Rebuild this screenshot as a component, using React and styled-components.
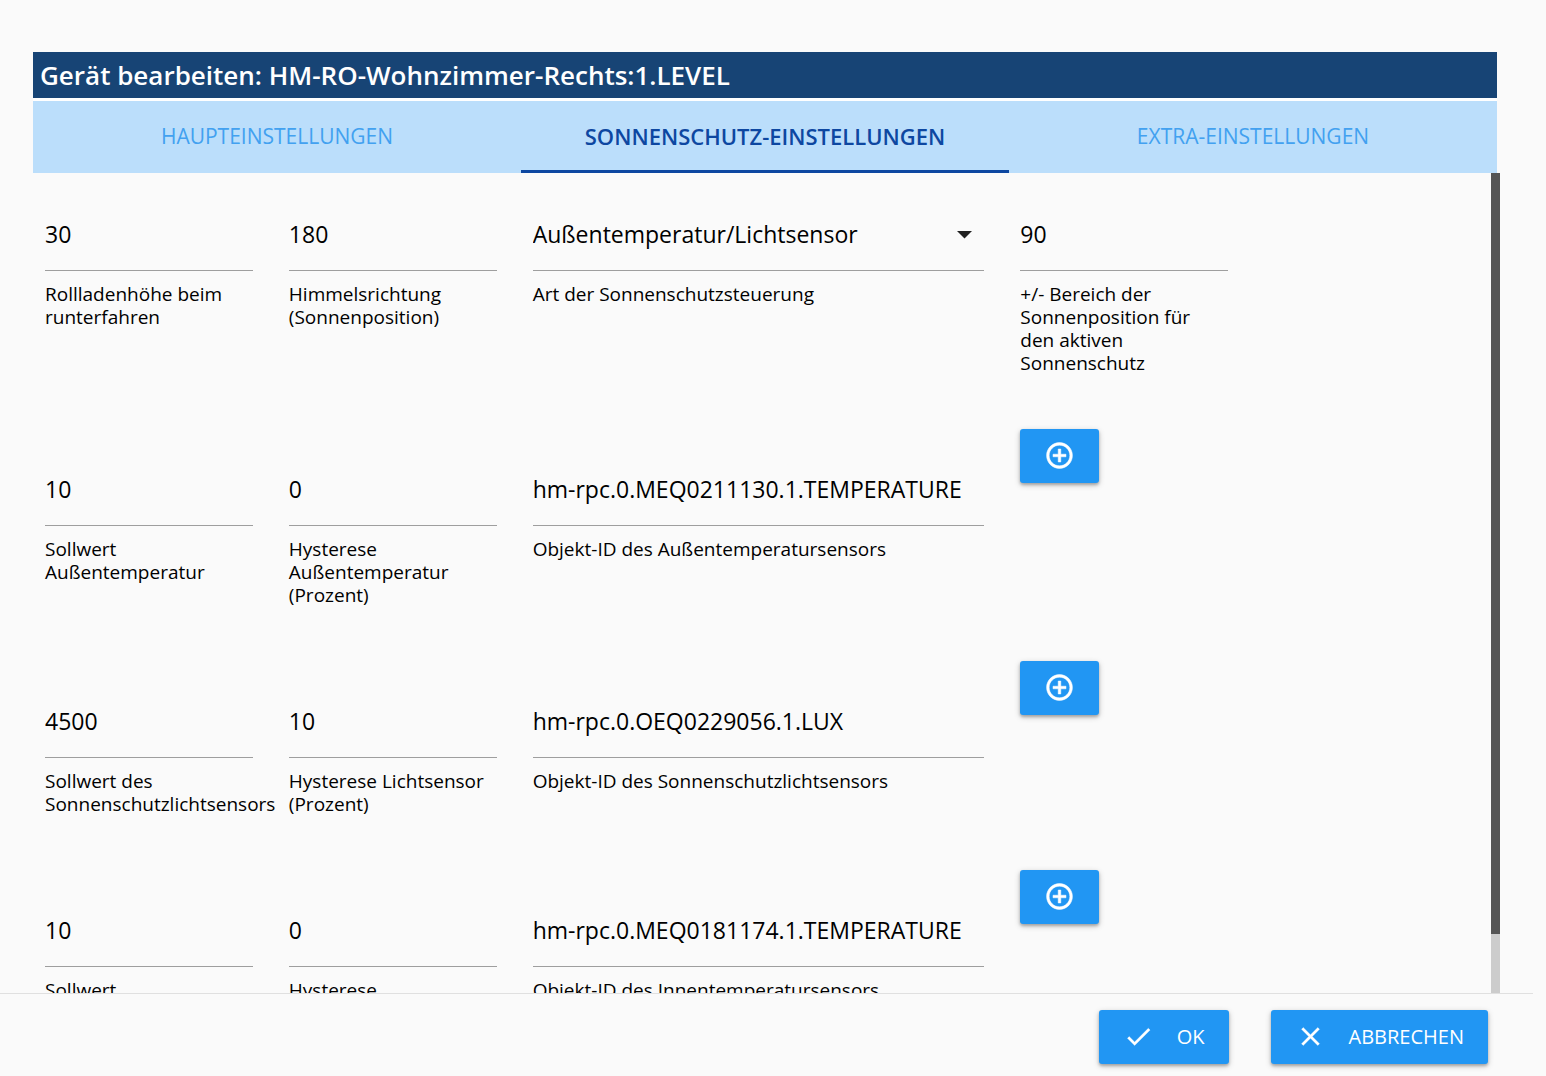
import { useEffect, useId, useRef, useState } from 'react';
import styled, { createGlobalStyle } from 'styled-components';

const tabs = [
  { id: 'main', label: 'Haupteinstellungen' },
  { id: 'sun', label: 'Sonnenschutz-Einstellungen' },
  { id: 'extra', label: 'Extra-Einstellungen' },
];

const sensorRows = [
  {
    id: 'outside',
    setpoint: { value: '10', label: 'Sollwert Außentemperatur' },
    hysteresis: { value: '0', label: 'Hysterese Außentemperatur (Prozent)' },
    sensor: { value: 'hm-rpc.0.MEQ0211130.1.TEMPERATURE', label: 'Objekt-ID des Außentemperatursensors' },
  },
  {
    id: 'light',
    setpoint: { value: '4500', label: 'Sollwert des Sonnenschutzlichtsensors' },
    hysteresis: { value: '10', label: 'Hysterese Lichtsensor (Prozent)' },
    sensor: { value: 'hm-rpc.0.OEQ0229056.1.LUX', label: 'Objekt-ID des Sonnenschutzlichtsensors' },
  },
  {
    id: 'inside',
    setpoint: { value: '10', label: 'Sollwert Innentemperatur' },
    hysteresis: { value: '0', label: 'Hysterese Innentemperatur (Prozent)' },
    sensor: { value: 'hm-rpc.0.MEQ0181174.1.TEMPERATURE', label: 'Objekt-ID des Innentemperatursensors' },
  },
];

const Field = ({ label, value }) => {
  const id = useId();

  return (
    <FieldBox>
      <Input id={id} type="text" defaultValue={value} />
      <Label htmlFor={id}>{label}</Label>
    </FieldBox>
  );
};

const SelectField = ({ label, options }) => {
  const id = useId();

  return (
    <FieldBox>
      <SelectWrap>
        <Select id={id}>
          {options.map((option) => (
            <option key={option}>{option}</option>
          ))}
        </Select>
        <Caret viewBox="0 0 15 8" aria-hidden="true">
          <path d="M0 0h15L7.500 7.500z" />
        </Caret>
      </SelectWrap>
      <Label htmlFor={id}>{label}</Label>
    </FieldBox>
  );
};

const AddIcon = () => (
  <Icon viewBox="0 0 24 24" stroke="currentColor" strokeWidth="0.4" aria-hidden="true">
    <path d="M13 7h-2v4H7v2h4v4h2v-4h4v-2h-4V7zm-1-5C6.480 2 2 6.480 2 12s4.480 10 10 10 10-4.480 10-10S17.520 2 12 2zm0 18c-4.410 0-8-3.590-8-8s3.590-8 8-8 8 3.590 8 8-3.590 8-8 8z" />
  </Icon>
);

const CheckIcon = () => (
  <Icon viewBox="0 0 24 24" stroke="currentColor" strokeWidth="0.2" aria-hidden="true">
    <path d="M9 16.170L4.830 12l-1.420 1.410L9 19 21 7l-1.410-1.410z" />
  </Icon>
);

const CloseIcon = () => (
  <Icon viewBox="0 0 24 24" stroke="currentColor" strokeWidth="0.2" aria-hidden="true">
    <path d="M19 6.410L17.590 5 12 10.590 6.410 5 5 6.410 10.590 12 5 17.590 6.410 19 12 13.410 17.590 19 19 17.590 13.410 12z" />
  </Icon>
);

const ScrollPanel = ({ children }) => {
  const ref = useRef(null);
  const [thumb, setThumb] = useState({ height: 0, top: 0 });

  const measure = () => {
    const { clientHeight, scrollHeight, scrollTop } = ref.current;
    setThumb({
      height: scrollHeight > clientHeight ? (clientHeight / scrollHeight) * 100 : 0,
      top: (scrollTop / scrollHeight) * 100,
    });
  };

  useEffect(() => {
    measure();
    window.addEventListener('resize', measure);
    return () => window.removeEventListener('resize', measure);
  }, [children]);

  return (
    <PanelFrame>
      <Panel ref={ref} role="tabpanel" onScroll={measure}>
        {children}
      </Panel>
      {thumb.height > 0 && (
        <ScrollTrack>
          <ScrollThumb style={{ height: `${thumb.height}%`, top: `${thumb.top}%` }} />
        </ScrollTrack>
      )}
    </PanelFrame>
  );
};

const SunSettings = () => (
  <Rows>
    <Row>
      <Field label="Rollladenhöhe beim runterfahren" value="30" />
      <Field label="Himmelsrichtung (Sonnenposition)" value="180" />
      <SelectField
        label="Art der Sonnenschutzsteuerung"
        options={['Außentemperatur/Lichtsensor', 'Außentemperatur', 'Lichtsensor']}
      />
      <Field label="+/- Bereich der Sonnenposition für den aktiven Sonnenschutz" value="90" />
    </Row>
    {sensorRows.map((row) => (
      <Row key={row.id}>
        <Field {...row.setpoint} />
        <Field {...row.hysteresis} />
        <Field {...row.sensor} />
        <ButtonCell>
          <Button type="button" aria-label={`${row.sensor.label} auswählen`}>
            <AddIcon />
          </Button>
        </ButtonCell>
      </Row>
    ))}
  </Rows>
);

const App = () => {
  const [active, setActive] = useState('sun');

  return (
    <>
      <GlobalStyle />
      <Dialog>
        <Content>
          <Title>Gerät bearbeiten: HM-RO-Wohnzimmer-Rechts:1.LEVEL</Title>
          <Tabs role="tablist">
            {tabs.map((tab) => (
              <Tab
                key={tab.id}
                type="button"
                role="tab"
                aria-selected={active === tab.id}
                $active={active === tab.id}
                onClick={() => setActive(tab.id)}
              >
                {tab.label}
              </Tab>
            ))}
          </Tabs>
          <ScrollPanel>{active === 'sun' && <SunSettings />}</ScrollPanel>
        </Content>
        <Footer>
          <Button type="button">
            <CheckIcon />
            OK
          </Button>
          <Button type="button">
            <CloseIcon />
            Abbrechen
          </Button>
        </Footer>
      </Dialog>
    </>
  );
};

const GlobalStyle = createGlobalStyle`
  *, *::before, *::after {
    box-sizing: border-box;
  }

  body {
    margin: 0;
    background: #fafafa;
    color: #000;
    font-family: 'Open Sans', 'Noto Sans', sans-serif;
  }

  button, input, select {
    font-family: inherit;
  }
`;

const Dialog = styled.main`
  display: flex;
  flex-direction: column;
  height: 100vh;
`;

const Content = styled.section`
  display: flex;
  flex-direction: column;
  flex: 1;
  min-height: 0;
  padding: 52px 46px 0 33px;
`;

const Title = styled.h1`
  flex-shrink: 0;
  margin: 0 3px 0 0;
  padding: 0 7px;
  border-bottom: 3px solid #fff;
  background: #174475;
  color: #fff;
  font-size: 26px;
  font-weight: 600;
  line-height: 46px;
`;

const Tabs = styled.div`
  display: flex;
  flex-shrink: 0;
  height: 72px;
  margin-right: 3px;
  background: #bbdefb;
`;

const Tab = styled.button`
  flex: 1;
  padding: 0;
  border: 0;
  border-bottom: 3px solid ${({ $active }) => ($active ? '#0d47a1' : 'transparent')};
  background: none;
  color: ${({ $active }) => ($active ? '#0d47a1' : '#42a1f0')};
  font-size: ${({ $active }) => ($active ? '22px' : '21px')};
  font-weight: ${({ $active }) => ($active ? 600 : 400)};
  text-transform: uppercase;
  cursor: pointer;
`;

const PanelFrame = styled.div`
  position: relative;
  display: flex;
  flex: 1;
  min-height: 0;
`;

const Panel = styled.div`
  flex: 1;
  min-width: 0;
  overflow-x: hidden;
  overflow-y: auto;
  scrollbar-width: none;
`;

/* Lies over the right edge of the rows */
const ScrollTrack = styled.div`
  position: absolute;
  top: 0;
  right: 0;
  bottom: 0;
  width: 9px;
  background: #ccc;
`;

const ScrollThumb = styled.div`
  position: absolute;
  width: 100%;
  background: #555;
`;

const Rows = styled.div`
  display: flex;
  flex-direction: column;
  gap: 54px;
  margin-right: 4px;
  padding: 1px 0 8px;
`;

/* Twelve-column page: 2 + 2 + 4 + 2, the last two stay empty */
const Row = styled.div`
  display: grid;
  grid-template-columns: 2fr 2fr 4fr 2fr 2fr;
`;

const FieldBox = styled.div`
  display: flex;
  flex-direction: column;
  gap: 12px;
  min-width: 0;
  padding: 25px 24px 0 12px;
`;

const Input = styled.input`
  width: 100%;
  height: 72px;
  padding: 0 0 2px;
  border: 0;
  border-bottom: 1px solid #9e9e9e;
  border-radius: 0;
  outline: none;
  background: none;
  color: #000;
  font-size: 23px;

  &:focus {
    border-bottom-color: #2196f3;
  }
`;

const SelectWrap = styled.div`
  position: relative;
`;

const Select = styled(Input).attrs({ as: 'select' })`
  display: block;
  appearance: none;
  cursor: pointer;
`;

const Caret = styled.svg`
  position: absolute;
  top: 32px;
  right: 12px;
  width: 15px;
  height: 8px;
  fill: #212121;
  pointer-events: none;
`;

const Label = styled.label`
  font-size: 19px;
  line-height: 23px;
`;

const ButtonCell = styled.div`
  padding-left: 12px;
`;

const Button = styled.button`
  display: inline-flex;
  align-items: center;
  gap: 23px;
  height: 54px;
  padding: 0 24px 2px;
  border: 0;
  border-radius: 3px;
  background: #2196f3;
  box-shadow: 0 2px 3px rgba(0, 0, 0, 0.24), 0 2px 6px rgba(0, 0, 0, 0.2);
  color: #fff;
  font-size: 20px;
  text-transform: uppercase;
  cursor: pointer;

  &:hover {
    background: #42a5f5;
  }
`;

const Icon = styled.svg`
  width: 31px;
  height: 31px;
  fill: currentColor;
`;

const Footer = styled.footer`
  display: flex;
  flex-shrink: 0;
  justify-content: flex-end;
  gap: 42px;
  margin-right: 13px;
  padding: 16px 45px 12px;
  border-top: 1px solid #e0e0e0;
`;

export default App;
